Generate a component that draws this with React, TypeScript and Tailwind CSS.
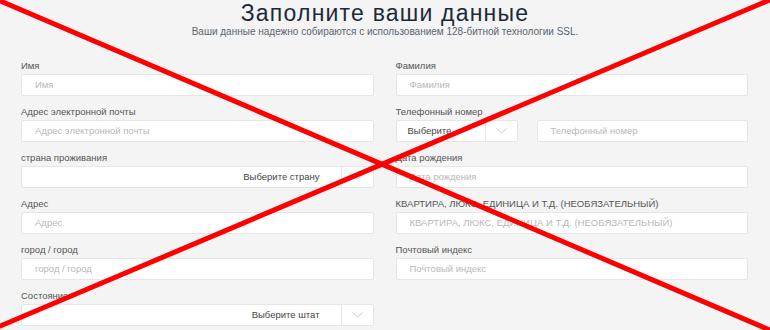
import React from "react";

const font = { fontFamily: '"Liberation Sans", Arial, sans-serif' };

function Chevron() {
  return (
    <svg width="11" height="6" viewBox="0 0 11 6" fill="none">
      <polyline points="0.5,0.5 5.5,5 10.5,0.5" stroke="#c8c8c8" strokeWidth="1" />
    </svg>
  );
}

function Field({ label, placeholder }: { label: string; placeholder: string }) {
  return (
    <div className="flex flex-col">
      <label className="text-[9.5px] leading-[12px] text-[#555] mb-[2px]">{label}</label>
      <div className="h-[22px] bg-white border border-[#e6e6e6] rounded-[2px] flex items-center pl-[13px] text-[9.5px] text-[#b8b8b8]">
        {placeholder}
      </div>
    </div>
  );
}

function SelectField({ label, value }: { label: string; value: string }) {
  return (
    <div className="flex flex-col">
      <label className="text-[9.5px] leading-[12px] text-[#555] mb-[2px]">{label}</label>
      <div className="h-[22px] bg-white border border-[#e6e6e6] rounded-[2px] flex">
        <div className="flex-1 flex items-center justify-end pr-[21px] text-[9.5px] text-[#444]">{value}</div>
        <div className="w-[32px] border-l border-[#e6e6e6] flex items-center justify-center">
          <Chevron />
        </div>
      </div>
    </div>
  );
}

export default function App() {
  return (
    <div className="relative w-[770px] h-[330px] overflow-hidden bg-[#f4f4f4]" style={font}>
      <div className="flex flex-col items-center">
        <h1 className="text-[23px] leading-[26px] text-[#1b2a3b] tracking-[1.2px]">
          Заполните ваши данные
        </h1>
        <p className="text-[10px] leading-[11px] text-[#5a6470]">
          Ваши данные надежно собираются с использованием 128-битной технологии SSL.
        </p>
      </div>

      <div className="grid grid-cols-2 gap-x-[22px] gap-y-[10px] pl-[21px] pr-[22px] mt-[23px]">
        <Field label="Имя" placeholder="Имя" />
        <Field label="Фамилия" placeholder="Фамилия" />

        <Field label="Адрес электронной почты" placeholder="Адрес электронной почты" />
        <div className="flex flex-col">
          <label className="text-[9.5px] leading-[12px] text-[#555] mb-[2px]">Телефонный номер</label>
          <div className="flex gap-[19px]">
            <div className="w-[122px] h-[22px] bg-white border border-[#e6e6e6] rounded-[2px] flex">
              <div className="flex-1 flex items-center pl-[11px] text-[9.5px] text-[#444]">Выберите</div>
              <div className="w-[32px] border-l border-[#e6e6e6] flex items-center justify-center">
                <Chevron />
              </div>
            </div>
            <div className="flex-1 h-[22px] bg-white border border-[#e6e6e6] rounded-[2px] flex items-center pl-[13px] text-[9.5px] text-[#b8b8b8]">
              Телефонный номер
            </div>
          </div>
        </div>

        <SelectField label="страна проживания" value="Выберите страну" />
        <Field label="Дата рождения" placeholder="Дата рождения" />

        <Field label="Адрес" placeholder="Адрес" />
        <Field label="КВАРТИРА, ЛЮКС, ЕДИНИЦА И Т.Д. (НЕОБЯЗАТЕЛЬНЫЙ)" placeholder="КВАРТИРА, ЛЮКС, ЕДИНИЦА И Т.Д.  (НЕОБЯЗАТЕЛЬНЫЙ)" />

        <Field label="город / город" placeholder="город / город" />
        <Field label="Почтовый индекс" placeholder="Почтовый индекс" />

        <SelectField label="Состояние" value="Выберите штат" />
      </div>

      <svg className="absolute inset-0 pointer-events-none" width="770" height="330" viewBox="0 0 770 330">
        <line x1="-2" y1="0" x2="772" y2="331" stroke="#ff0000" strokeWidth="5" />
        <line x1="772" y1="-1" x2="-2" y2="327" stroke="#ff0000" strokeWidth="5" />
      </svg>
    </div>
  );
}
